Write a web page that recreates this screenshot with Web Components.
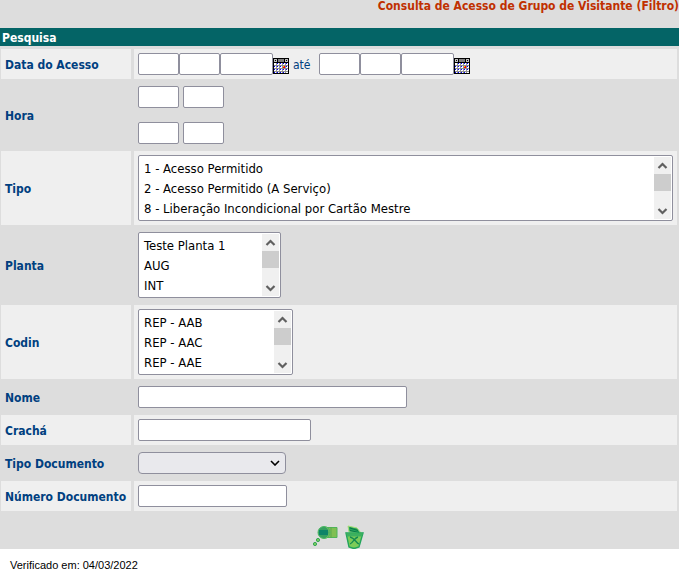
<!DOCTYPE html>
<html lang="pt-BR">
<head>
<meta charset="utf-8">
<title>Consulta de Acesso de Grupo de Visitante</title>
<style>body{margin:0;background:#fff}</style>
</head>
<body>
<access-filter></access-filter>

<template id="access-filter">
<style>
:host{display:block;color:#004080;font:12px/16px "DejaVu Sans Condensed","DejaVu Sans",sans-serif}
main{background:#ddd}
h1{margin:0;height:28px;text-align:right;color:#c03000;font-size:12px;line-height:12px;font-weight:bold}
h2{margin:0;padding:2px 2px 0;background:#046466;color:#fff;font-size:12px;line-height:16px}
form{margin:0}
.rows{display:grid;gap:3px;padding:3px 2px 0 1px}
label{font-weight:bold;padding-top:2px}
input,.combo{box-sizing:border-box;height:22px;margin:0;border:1px solid #8f8f9d;border-radius:2px;background:#fff;font:inherit;color:#000;padding:0 4px}
.w2{width:41px}.w4{width:53px}
.pair{display:flex;gap:4px}
.stack{display:grid;gap:14px}
.dates{display:flex;align-items:center}
.dates span{padding:2px 8px 0 4px}
.nome{width:269px}.cracha{width:173px}.numero{width:149px}
.combo{appearance:none;width:148px;border-radius:4px;background:#e9e9ed url('data:image/svg+xml,<svg xmlns="http://www.w3.org/2000/svg" width="10" height="6"><path d="M1 1l4 4 4-4" fill="none" stroke="black" stroke-width="1.6"/></svg>') no-repeat right 5px center}
.planta{width:143px}.codin{width:155px}
list-box option{box-sizing:border-box;height:20px;padding:2px}
.actions{display:flex;justify-content:center;gap:6px;padding:14px 2px 0 0}
.actions button{display:flex;padding:0;border:0;background:none}
footer{padding:8px 10px;color:#000;font:11px/16px "Liberation Sans",Arial,sans-serif}
</style>
<main>
<h1>Consulta de Acesso de Grupo de Visitante (Filtro)</h1>
<h2>Pesquisa</h2>
<form>
<div class="rows">
<filter-row shade><label slot="label" for="dia1">Data do Acesso</label>
<div class="dates"><input id="dia1" class="w2"><input class="w2" aria-label="Mês inicial"><input class="w4" aria-label="Ano inicial"><calendar-button></calendar-button><span>até</span><input class="w2" aria-label="Dia final"><input class="w2" aria-label="Mês final"><input class="w4" aria-label="Ano final"><calendar-button></calendar-button></div></filter-row>
<filter-row><label slot="label" for="hora1">Hora</label>
<div class="stack"><div class="pair"><input id="hora1" class="w2"><input class="w2" aria-label="Minuto inicial"></div><div class="pair"><input class="w2" aria-label="Hora final"><input class="w2" aria-label="Minuto final"></div></div></filter-row>
<filter-row shade><label slot="label" for="tipo">Tipo</label>
<list-box><select id="tipo" multiple size="3"><option>1 - Acesso Permitido</option><option>2 - Acesso Permitido (A Serviço)</option><option>8 - Liberação Incondicional por Cartão Mestre</option></select></list-box></filter-row>
<filter-row><label slot="label" for="planta">Planta</label>
<list-box class="planta"><select id="planta" multiple size="3"><option>Teste Planta 1</option><option>AUG</option><option>INT</option></select></list-box></filter-row>
<filter-row shade><label slot="label" for="codin">Codin</label>
<list-box class="codin"><select id="codin" multiple size="3"><option>REP - AAB</option><option>REP - AAC</option><option>REP - AAE</option></select></list-box></filter-row>
<filter-row><label slot="label" for="nome">Nome</label><input id="nome" class="nome"></filter-row>
<filter-row shade><label slot="label" for="cracha">Crachá</label><input id="cracha" class="cracha"></filter-row>
<filter-row><label slot="label" for="tipodoc">Tipo Documento</label><select id="tipodoc" class="combo"><option></option></select></filter-row>
<filter-row shade><label slot="label" for="numero">Número Documento</label><input id="numero" class="numero"></filter-row>
</div>
<div class="actions">
<button type="submit" aria-label="Pesquisar"><svg width="26" height="24" viewBox="0 0 26 24">
<path d="M13 2.500h11v10H13z" fill="#80bf52" stroke="#4fb45a"/><path d="M18 2v11" stroke="#5aa84c"/>
<circle cx="11" cy="7.500" r="6" fill="#36a060" stroke="#4ab860"/>
<path d="M6 5h9v5H6z" fill="#0c8468"/><path d="M13 2c4 2 4 9 0 11" fill="none" stroke="#6fc060"/>
<circle cx="5" cy="15" r="1.600" fill="#7fd060" stroke="#35a555"/><circle cx="2" cy="19" r="1.600" fill="#7fd060" stroke="#35a555"/></svg></button>
<button type="reset" aria-label="Limpar"><svg width="19" height="24" viewBox="0 0 19 24">
<path d="M4 7L3 1l9 2 4 5z" fill="#28a35c" stroke="#a8e078"/><path d="M5 3l8 2.500M5 5.500l9 2" stroke="#087a48"/>
<path d="M1 8h17l-4 14-4 1.200H8L4 22z" fill="#7ccc58" stroke="#22a55c" stroke-width="1.400"/>
<path d="M1 7.500l4 1.500h9l4-1.500-1 4H2z" fill="#3db060"/><path d="M5 12c5 1 6 6 9 7M13 12c-4 1-5 6-8 7" fill="none" stroke="#128a50" stroke-width="1.300"/></svg></button>
</div>
</form>
</main>
<footer>Verificado em: 04/03/2022</footer>
</template>

<template id="filter-row">
<style>
:host{display:grid;grid-template-columns:130px 1fr;gap:3px}
div{display:flex;align-items:center;box-sizing:border-box;min-width:0;padding:4px}
.control{display:block}
:host([shade]) div{background:#efefef}
::slotted(input),::slotted(select){display:block}
</style>
<div><slot name="label"></slot></div><div class="control"><slot></slot></div>
</template>

<template id="list-box">
<style>
:host{display:flex;box-sizing:border-box;height:66px;border:1px solid #8f8f9d;border-radius:2px;background:#fff;padding:1px;color:#000}
::slotted(select){flex:1;min-width:0;box-sizing:border-box;margin:0;padding:2px 0 0 2px;border:0;background:#fff;color:#000;outline:0;scrollbar-width:none;font:13px/16px "DejaVu Sans Condensed","DejaVu Sans",sans-serif}
svg{width:17px;height:62px;background:#f0f0f0}
</style>
<slot></slot>
<svg viewBox="0 0 17 62" aria-hidden="true"><path d="M0 17h17v17H0z" fill="#cdcdcd"/><path d="M4.500 11l4-4 4 4M4.500 52l4 4 4-4" fill="none" stroke="#606060" stroke-width="2.200"/></svg>
</template>

<template id="calendar-button">
<style>
:host{display:block;padding-top:4px}
button{display:block;padding:0;border:0;background:none}
svg{display:block}
</style>
<button type="button" aria-label="Calendário"><svg width="16" height="16" viewBox="0 0 16 16" shape-rendering="crispEdges">
<path d="M0 0h16v16H0z"/><path d="M5 1h6v3H5z" fill="#808080"/><path d="M1 1h3v3H1zM12 1h3v3h-3z" fill="#c0c0c0"/><path d="M2 2h1v1H2zM13 2h1v1h-1z"/>
<path d="M1 5h14v10H1z" fill="#909090"/>
<path d="M1 5h2v2H1zM4 5h2v2H4zM7 5h2v2H7zM10 5h2v2h-2zM13 5h2v2h-2zM1 8h2v2H1zM4 8h2v2H4zM7 8h2v2H7zM13 8h2v2h-2zM1 11h2v2H1zM4 11h2v2H4zM7 11h2v2H7zM10 11h2v2h-2zM13 11h2v2h-2zM1 14h2v1H1zM4 14h2v1H4zM7 14h2v1H7zM10 14h2v1h-2zM13 14h2v1h-2z" fill="#fff"/>
<path d="M4 5h1v1H4zM7 5h1v1H7zM10 5h1v1h-1zM13 5h1v1h-1zM1 8h1v1H1zM4 8h1v1H4zM7 8h1v1H7zM13 8h1v1h-1zM1 11h1v1H1zM4 11h1v1H4zM7 11h1v1H7zM10 11h1v1h-1zM13 11h1v1h-1zM1 14h1v1H1zM4 14h1v1H4zM7 14h1v1H7zM10 14h1v1h-1z" fill="#00f"/>
<path d="M10 8h2v2h-2z" fill="#f00"/><path d="M10 8h1v1h-1z" fill="#fc0"/></svg></button>
</template>

<script>
for (const name of ['filter-row', 'list-box', 'calendar-button', 'access-filter']) {
  customElements.define(name, class extends HTMLElement {
    constructor() {
      super();
      this.attachShadow({ mode: 'open' }).append(document.getElementById(name).content.cloneNode(true));
    }
  });
}
</script>
</body>
</html>
